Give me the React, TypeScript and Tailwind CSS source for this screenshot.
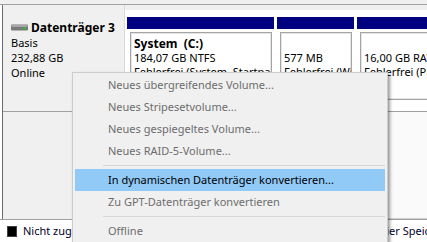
import React from 'react';

const menuItems: { label: string; enabled?: boolean; active?: boolean; sep?: boolean }[] = [
  { label: 'Neues übergreifendes Volume...' },
  { label: 'Neues Stripesetvolume...' },
  { label: 'Neues gespiegeltes Volume...' },
  { label: 'Neues RAID-5-Volume...' },
  { label: '', sep: true },
  { label: 'In dynamischen Datenträger konvertieren...', enabled: true, active: true },
  { label: 'Zu GPT-Datenträger konvertieren' },
  { label: '', sep: true },
  { label: 'Offline' },
];

const DiskIcon = () => (
  <svg width="17" height="7" viewBox="0 0 17 7" className="shrink-0">
    <rect x="0" y="0.5" width="17" height="6" rx="1" fill="#7a7a7a" />
    <rect x="0.5" y="1" width="16" height="2" fill="#a8a8a8" />
    <rect x="12" y="3.5" width="3" height="2" fill="#22c02a" />
  </svg>
);

const Partition = ({ lines, width }: { lines: [string, string, string]; width: string }) => (
  <div className={`${width} shrink-0 flex flex-col`}>
    <div className="h-[12px] bg-[#000080]" />
    <div className="mt-[3px] ml-[3px] mr-[2px] h-[68px] border border-[#a5a5a5] shadow-[inset_0_0_0_1px_#e4e4e4] bg-white pl-[3px] pt-[4px] overflow-hidden whitespace-pre leading-[14px]">
      <div className="font-bold text-[12px] h-[14px]">{lines[0]}</div>
      <div className="h-[14px]">{lines[1]}</div>
      <div className="h-[14px]">{lines[2]}</div>
    </div>
  </div>
);

export default function App() {
  return (
    <div className="w-[427px] h-[242px] overflow-hidden relative bg-white text-[11px] text-black font-['Noto_Sans',sans-serif]">
      <div className="h-[4px] bg-[#f0f0f0]" />
      <div className="h-px bg-[#a0a0a0]" />

      {/* Datenträger 3 */}
      <div className="flex h-[107px]">
        <div className="w-[125px] shrink-0 flex">
          <div className="w-[2px] bg-white" />
          <div className="w-px bg-[#6a6a6a]" />
          <div className="flex-1 bg-[#f0f0f0] border-r border-[#dadada] border-b border-b-[#a0a0a0] pl-[8px] pt-[15px] leading-[15px] whitespace-nowrap">
            <div className="flex items-center gap-[3px] font-bold text-[12px]">
              <DiskIcon />
              <span>Datenträger 3</span>
            </div>
            <div>Basis</div>
            <div>232,88 GB</div>
            <div>Online</div>
          </div>
        </div>
        <div className="flex-1 border-t-[5px] border-[#f0f0f0] border-b border-b-[#a0a0a0] pt-[7px] pl-[2px] flex gap-[3px] overflow-hidden">
          <Partition width="w-[147px]" lines={['System  (C:)', '184,07 GB NTFS', 'Fehlerfrei (System, Startpartition, Auslagerungsdatei)']} />
          <Partition width="w-[77px]" lines={['', '577 MB', 'Fehlerfrei (Wiederherstellungspartition)']} />
          <Partition width="w-[80px]" lines={['', '16,00 GB RAW', 'Fehlerfrei (Primäre Partition)']} />
        </div>
      </div>

      {/* zweite Zeile */}
      <div className="flex h-[107px]">
        <div className="w-[125px] shrink-0 flex">
          <div className="w-[2px] bg-white" />
          <div className="w-px bg-[#6a6a6a]" />
          <div className="flex-1 bg-[#f0f0f0] border-r border-[#dadada]" />
        </div>
        <div className="flex-1 bg-[#fafafa] border-b border-[#d0d0d0]" />
      </div>

      {/* Legende */}
      <div className="h-[23px] border-t border-[#a0a0a0] flex items-center whitespace-nowrap text-[#00002a]">
        <div className="w-[140px] shrink-0 flex items-center pl-[7px] gap-[6px]">
          <span className="w-[10px] h-[11px] bg-black border border-[#404040]" />
          <span>Nicht zugeordnet</span>
        </div>
        <div className="w-[110px] shrink-0 flex items-center gap-[6px]">
          <span className="w-[10px] h-[11px] bg-[#000080]" />
          <span>Primäre Partition</span>
        </div>
        <div className="w-[104px] shrink-0 flex items-center gap-[6px]">
          <span className="w-[10px] h-[11px] bg-[#008000]" />
          <span>Erweiterte Partition</span>
        </div>
        <div className="shrink-0 flex items-center gap-[6px]">
          <span className="w-[10px] h-[11px] bg-[#80ff80]" />
          <span>Freier Speicher</span>
        </div>
      </div>

      {/* Kontextmenü */}
      <div className="absolute left-[72px] top-[72px] w-[316px] h-[180px] bg-[#f0f0f0] border border-[#cccccc] shadow-[2px_2px_3px_rgba(0,0,0,0.4)] pt-[1px]">
        {menuItems.map((item, i) =>
          item.sep ? (
            <div key={i} className="h-[7px] pt-[3px] pl-[30px] pr-[2px]">
              <div className="h-px bg-[#d7d7d7]" />
            </div>
          ) : (
            <div
              key={i}
              className={`mx-[2px] h-[22px] flex items-center pl-[33px] whitespace-nowrap ${item.active ? 'bg-[#91c9f7] text-black' : item.enabled ? 'text-black' : 'text-[#6d6d6d]'}`}
            >
              {item.label}
            </div>
          )
        )}
      </div>
    </div>
  );
}
